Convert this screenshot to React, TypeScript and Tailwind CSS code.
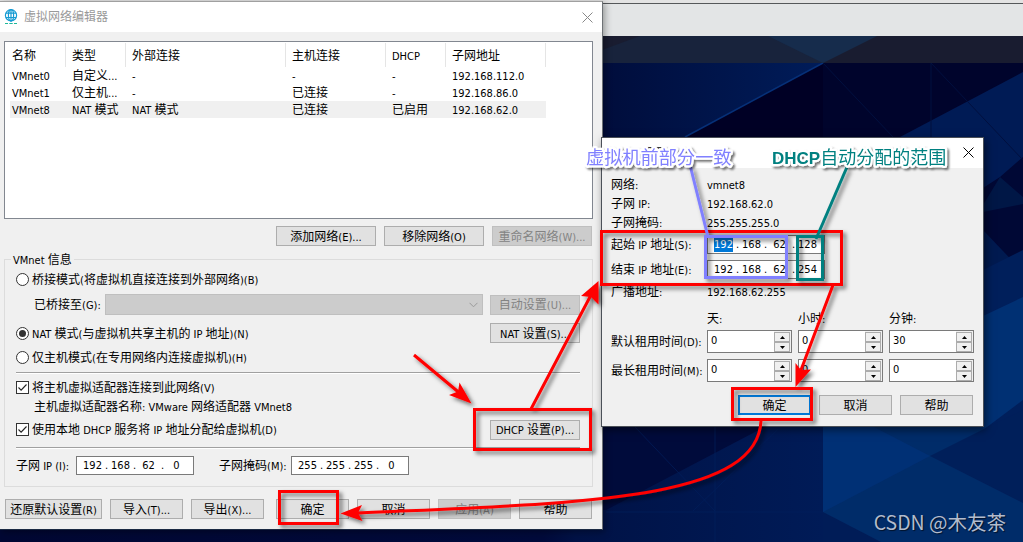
import type { ReactNode } from 'react'

const columns = [
  { title: '名称', width: 'w-[60px]' },
  { title: '类型', width: 'w-[60px]' },
  { title: '外部连接', width: 'w-[160px]' },
  { title: '主机连接', width: 'w-[100px]' },
  { title: 'DHCP', width: 'w-[60px]' },
  { title: '子网地址', width: 'w-[100px]' },
]

const networks = [
  ['VMnet0', '自定义...', '-', '-', '-', '192.168.112.0'],
  ['VMnet1', '仅主机...', '-', '已连接', '-', '192.168.86.0'],
  ['VMnet8', 'NAT 模式', 'NAT 模式', '已连接', '已启用', '192.168.62.0'],
]

// Latin runs are set one pixel smaller than the Chinese ones
function T({ children }: { children: string }) {
  const parts = children.split(/([^\u2e80-\u9fff]+)/).filter(Boolean)
  return (
    <span className="inline-block pt-[2px] whitespace-pre">
      {parts.map((part, i) =>
        /[\u2e80-\u9fff]/.test(part) ? (
          <span key={i}>{part}</span>
        ) : (
          <span key={i} className="text-[11px]">{part}</span>
        )
      )}
    </span>
  )
}

function Button({ children, className = '', disabled = false, primary = false }: { children: string; className?: string; disabled?: boolean; primary?: boolean }) {
  const look = disabled
    ? 'border border-[#bfbfbf] bg-[#cccccc] text-[#838383]'
    : primary
      ? 'border-2 border-[#0078d7] bg-[#e1e1e1]'
      : 'border border-[#adadad] bg-[#e1e1e1]'
  return (
    <button className={`flex h-5 shrink-0 items-center justify-center ${look} ${className}`}>
      <T>{children}</T>
    </button>
  )
}

function Radio({ checked = false, children }: { checked?: boolean; children: string }) {
  return (
    <label className="flex h-[17px] items-center gap-[3px]">
      <span className="flex size-[13px] items-center justify-center rounded-full border border-[#333] bg-white">
        {checked && <span className="size-[7px] rounded-full bg-[#333]" />}
      </span>
      <T>{children}</T>
    </label>
  )
}

function Checkbox({ children }: { children: string }) {
  return (
    <label className="flex h-[17px] items-center gap-[3px]">
      <span className="flex size-[13px] items-center justify-center border border-[#333] bg-white">
        <svg className="size-[11px]" viewBox="0 0 11 11" fill="none" stroke="#222" strokeWidth="1.1">
          <path d="M1.5 5.5l2.6 2.7L9.5 2.5" />
        </svg>
      </span>
      <T>{children}</T>
    </label>
  )
}

function IpField({ value, selected = false }: { value: string[]; selected?: boolean }) {
  return (
    <div className="flex h-[19px] w-[118px] shrink-0 items-center border border-[#7a7a7a] bg-white pl-[3px] text-[11px]">
      {value.map((part, i) => (
        <div key={i} className="flex">
          {i > 0 && <span className="w-[3px] text-center">.</span>}
          <span className="flex w-[25px] justify-center">
            <span className={selected && i === 0 ? 'bg-[#0078d7] text-white' : ''}>{part}</span>
          </span>
        </div>
      ))}
    </div>
  )
}

function SpinButton({ up = false }: { up?: boolean }) {
  return (
    <span className="flex h-[10px] w-[16px] items-center justify-center border border-[#acacac] bg-[#f0f0f0]">
      <svg className="h-[3px] w-[5px]" viewBox="0 0 5 3">
        <path d={up ? 'M0 3L2.5 0L5 3Z' : 'M0 0L2.5 3L5 0Z'} fill="#000" />
      </svg>
    </span>
  )
}

function Spinner({ value }: { value: string }) {
  return (
    <div className="flex h-[23px] w-[85px] justify-between border border-[#7a7a7a] bg-white">
      <span className="pt-px pl-[3px] text-[11px] leading-[17px]">{value}</span>
      <span className="flex w-[17px] flex-col bg-[#f0f0f0] pt-px">
        <SpinButton up />
        <SpinButton />
      </span>
    </div>
  )
}

function Close({ color }: { color: string }) {
  return (
    <svg className="size-[11px]" viewBox="0 0 11 11" stroke={color} strokeWidth="1">
      <path d="M0.5 0.5L10.5 10.5M10.5 0.5L0.5 10.5" />
    </svg>
  )
}

function GlobeIcon() {
  return (
    <svg className="h-4 w-[14px]" viewBox="0 0 14 16" fill="none" stroke="#159bd3" strokeWidth="1.2">
      <circle cx="7" cy="6.3" r="5.6" />
      <ellipse cx="7" cy="6.3" rx="2.6" ry="5.6" />
      <path d="M1.9 4.1h10.2M1.9 8.5h10.2M7 .7v12" />
      <path d="M1 14.5h3M5.3 14.5h3.4M10 14.5h3" stroke="#1fb89b" />
    </svg>
  )
}

function Wallpaper() {
  return (
    <svg className="absolute inset-0" width="1023" height="542" viewBox="0 0 1023 542">
      <defs>
        <linearGradient id="left" x1="602" x2="823" y1="0" y2="0" gradientUnits="userSpaceOnUse">
          <stop offset="0" stopColor="#000d3c" />
          <stop offset="1" stopColor="#001c59" />
        </linearGradient>
        <linearGradient id="base" x1="0" x2="823" y1="0" y2="0" gradientUnits="userSpaceOnUse">
          <stop offset="0" stopColor="#000733" />
          <stop offset="0.66" stopColor="#000a3b" />
          <stop offset="0.7" stopColor="#001246" />
          <stop offset="1" stopColor="#001b57" />
        </linearGradient>
      </defs>
      <rect width="1023" height="542" fill="#00042c" />
      <path d="M602 63H823L602 182Z" fill="url(#left)" />
      <path d="M823 63L685 137H823Z" fill="#000025" />
      <path d="M823 63L685 137" stroke="#063078" strokeWidth="1.5" />
      <path d="M1023 72L900 137V300H1023Z" fill="#001b55" />
      <path d="M983 188L1000 177L1023 157V340L983 310Z" fill="#000835" />
      <path d="M983 205L1000 177L1023 197V204L983 212Z" fill="#001746" />
      <path d="M983 230L1023 272V300L983 318Z" fill="#001a50" />
      <path d="M931 63V137M931 63L1023 160M823 63L893 137" stroke="#00103f" />
      <rect x="0" y="420" width="823" height="122" fill="url(#base)" />
      <path d="M602 420H778L606 510H602Z" fill="#000b3b" />
      <path d="M635 427L715 511M778 429L693 511M715 427V542M606 512H823" stroke="#001f5c" strokeWidth=".7" />
      <path d="M823 426H1023V542H823Z" fill="#002c69" />
      <path d="M983 270L1023 250V430H983Z" fill="#001f5b" />
      <path d="M983 316L1023 297V400L983 430Z" fill="#003073" />
      <path d="M823 426H872L930 456L823 512Z" fill="#003075" />
      <path d="M930 456L1000 421L1023 410V503Z" fill="#001f5a" />
      <path d="M823 512L881 542H823Z" fill="#001c57" />
      <path d="M602 4H1023V36H602Z" fill="#e3e5e6" />
      <path d="M0 0H1023V3H0Z" fill="#e3e3e3" />
      <path d="M602 3.5H1023" stroke="#55585a" />
      <path d="M602 36H1023V63H602Z" fill="#191c30" />
      <path d="M640 36H823V63H602V50Z" fill="#18233c" />
      <path d="M768 36H877L823 63Z" fill="#162c4c" />
    </svg>
  )
}

function Window({ className, children }: { className: string; children: ReactNode }) {
  return <div className={`absolute flex flex-col bg-[#f0f0f0] ${className}`}>{children}</div>
}

function EditorWindow() {
  return (
    <Window className="top-px left-0 h-[529px] w-[603px] border-t border-r border-b border-t-[#a0a0a0] border-r-[#6e7276] border-b-[#1b2a44] shadow-[2px_2px_7px_rgba(0,0,0,0.35)]">
      <div className="flex h-[30px] shrink-0 items-center bg-white pr-[9px] pl-1">
        <GlobeIcon />
        <span className="ml-[6px] grow text-[#999]">虚拟网络编辑器</span>
        <Close color="#888" />
      </div>

      <div className="mt-[9px] ml-1 h-[178px] w-[589px] shrink-0 border border-[#828790] bg-white pl-px">
        <div className="flex h-[25px] pt-px">
          {columns.map((column) => (
            <div key={column.title} className={`flex items-center border-r border-[#e5e5e5] pl-[6px] ${column.width}`}>
              <T>{column.title}</T>
            </div>
          ))}
        </div>
        {networks.map((row, r) => (
          <div key={row[0]} className={`ml-1 flex h-[17px] w-[536px] items-center ${r === 2 ? 'bg-[#f0f0f0]' : ''}`}>
            {row.map((cell, i) => (
              <div key={i} className={`flex shrink-0 pl-[2px] ${columns[i].width}`}>
                <T>{cell}</T>
              </div>
            ))}
          </div>
        ))}
      </div>

      <div className="mt-[7px] flex justify-end gap-2 pr-[10px]">
        <Button className="w-[100px]">添加网络(E)...</Button>
        <Button className="w-[100px]">移除网络(O)</Button>
        <Button className="w-[100px]" disabled>重命名网络(W)...</Button>
      </div>

      <fieldset className="mt-[5px] ml-1 flex h-[236px] w-[589px] shrink-0 flex-col border border-[#dcdcdc] pr-3 pl-[11px]">
        <legend className="-ml-[5px] flex h-4 items-center px-[2px]"><T>VMnet 信息</T></legend>
        <div className="flex h-[25px] items-center">
          <Radio>桥接模式(将虚拟机直接连接到外部网络)(B)</Radio>
        </div>
        <div className="flex h-[25px] items-center pl-[18px]">
          <span className="flex w-[71px]"><T>已桥接至(G):</T></span>
          <div className="mr-[7px] flex h-[21px] w-[378px] items-center justify-end border border-[#bfbfbf] bg-[#cccccc] pr-1">
            <svg className="h-[6px] w-[9px]" viewBox="0 0 9 6" fill="none" stroke="#9a9a9a">
              <path d="M.5 .8L4.5 4.8L8.5 .8" />
            </svg>
          </div>
          <Button className="w-[90px]" disabled>自动设置(U)...</Button>
        </div>
        <div className="mt-px flex h-[30px] items-center justify-between">
          <Radio checked>NAT 模式(与虚拟机共享主机的 IP 地址)(N)</Radio>
          <Button className="w-[90px]">NAT 设置(S)...</Button>
        </div>
        <div className="flex h-[24px] items-start pt-px">
          <Radio>仅主机模式(在专用网络内连接虚拟机)(H)</Radio>
        </div>
        <div className="h-[2px] border-t border-b border-t-[#a0a0a0] border-b-white" />
        <div className="flex h-[26px] items-center">
          <Checkbox>将主机虚拟适配器连接到此网络(V)</Checkbox>
        </div>
        <div className="flex h-[13px] items-center pl-[18px]"><T>主机虚拟适配器名称: VMware 网络适配器 VMnet8</T></div>
        <div className="mb-px flex h-[33px] items-center justify-between">
          <Checkbox>使用本地 DHCP 服务将 IP 地址分配给虚拟机(D)</Checkbox>
          <Button className="w-[90px]">DHCP 设置(P)...</Button>
        </div>
        <div className="h-[2px] border-t border-b border-t-[#a0a0a0] border-b-white" />
        <div className="flex h-[32px] items-center">
          <span className="flex w-[60px]"><T>子网 IP (I):</T></span>
          <IpField value={['192', '168', '62', '0']} />
          <span className="ml-[25px] flex w-[72px]"><T>子网掩码(M):</T></span>
          <IpField value={['255', '255', '255', '0']} />
        </div>
      </fieldset>

      <div className="mt-3 flex gap-2 pl-[5px]">
        <Button className="w-[97px]">还原默认设置(R)</Button>
        <Button className="w-[73px]">导入(T)...</Button>
        <Button className="w-[73px]">导出(X)...</Button>
        <Button className="ml-1 w-[73px]">确定</Button>
        <Button className="w-[73px]">取消</Button>
        <Button className="w-[73px]" disabled>应用(A)</Button>
        <Button className="w-[73px]">帮助</Button>
      </div>
    </Window>
  )
}

function DhcpWindow() {
  return (
    <Window className="top-[137px] left-[601px] h-[290px] w-[383px] border border-[#4b5058] shadow-[2px_3px_8px_rgba(0,0,0,0.5)]">
      <div className="flex h-[30px] shrink-0 items-center justify-between bg-white pr-[9px] pl-[9px]">
        <T>DHCP 设置</T>
        <span className="-mt-[2px]"><Close color="#000" /></span>
      </div>
      <div className="flex flex-col pt-[7px] pl-[9px]">
        <div className="grid grid-cols-[96px_1fr] grid-rows-[19px_19px_19px_25px_24px_20px] items-center">
          <T>网络:</T>
          <T>vmnet8</T>
          <T>子网 IP:</T>
          <T>192.168.62.0</T>
          <T>子网掩码:</T>
          <T>255.255.255.0</T>
          <T>起始 IP 地址(S):</T>
          <IpField value={['192', '168', '62', '128']} selected />
          <T>结束 IP 地址(E):</T>
          <IpField value={['192', '168', '62', '254']} />
          <T>广播地址:</T>
          <T>192.168.62.255</T>
        </div>
        <div className="mt-[9px] grid grid-cols-[96px_91px_91px_85px] grid-rows-[17px_29px_29px] items-center">
          <span />
          <T>天:</T>
          <T>小时:</T>
          <T>分钟:</T>
          <T>默认租用时间(D):</T>
          <Spinner value="0" />
          <Spinner value="0" />
          <Spinner value="30" />
          <T>最长租用时间(M):</T>
          <Spinner value="0" />
          <Spinner value="0" />
          <Spinner value="0" />
        </div>
      </div>
      <div className="mt-[10px] flex justify-end gap-2 pr-[10px]">
        <Button className="w-[73px]" primary>确定</Button>
        <Button className="w-[73px]">取消</Button>
        <Button className="w-[73px]">帮助</Button>
      </div>
    </Window>
  )
}

function Annotations() {
  return (
    <svg className="absolute inset-0" width="1023" height="542" viewBox="0 0 1023 542">
      <defs>
        <filter id="shadow" x="0" y="0" width="1023" height="542" filterUnits="userSpaceOnUse">
          <feDropShadow dx="3" dy="3" stdDeviation="2" floodColor="#000" floodOpacity="0.55" />
        </filter>
        <filter id="text-shadow" x="0" y="0" width="1023" height="542" filterUnits="userSpaceOnUse">
          <feDropShadow dx="2" dy="2" stdDeviation="1.2" floodColor="#000" floodOpacity="0.55" />
        </filter>
      </defs>
      <g filter="url(#shadow)" fill="none" stroke="#ff0000" strokeWidth="3">
        <rect x="601.5" y="231.5" width="240" height="53" />
        <rect x="474.5" y="409.5" width="116" height="40" />
        <rect x="279.5" y="491.5" width="58" height="32" />
        <rect x="732.5" y="388.5" width="79" height="31" />
        <path d="M414 355L462 395M531 409L591 295M833 285L801 370" />
        <path d="M761 421C757 502 575 503 358 513" />
        <g fill="#ff0000" stroke="none">
          <path d="M471.5 403.5L459.5 382.5L458 391.5L449 395Z" />
          <path d="M598.5 281L581 296L591 297L598.5 304.5Z" />
          <path d="M795.5 387L795.5 363L801 370L811 369.5Z" />
          <path d="M340.5 513.5L362 505L358 513L362.5 521Z" />
        </g>
      </g>
      <g filter="url(#shadow)" fill="none" strokeWidth="3">
        <path d="M690.5 167L707.5 235" stroke="#8080ff" />
        <rect x="705.5" y="236.5" width="81" height="41" stroke="#8080ff" />
        <path d="M847 167L816 239" stroke="#008080" />
        <rect x="797.5" y="236.5" width="25" height="43" stroke="#008080" />
      </g>
      <g filter="url(#text-shadow)" stroke="#fff" strokeWidth="4.5" strokeLinejoin="round" paintOrder="stroke">
        <text x="586" y="163.5" fill="#8080ff" className="text-[18.2px]">虚拟机前部分一致</text>
        <text x="772" y="163.5" fill="#008080" className="text-[18px]">
          <tspan className="font-['Liberation_Sans',sans-serif] text-[17px] font-bold">DHCP</tspan>自动分配的范围
        </text>
      </g>
    </svg>
  )
}

export default function App() {
  return (
    <div className="relative h-[542px] w-[1023px] overflow-hidden font-['DejaVu_Sans_Condensed','Noto_Sans','Noto_Sans_CJK_SC',sans-serif] text-[12px] leading-[15px] text-black">
      <Wallpaper />
      <EditorWindow />
      <DhcpWindow />
      <Annotations />
      <div className="absolute right-[17px] bottom-[7px] font-['Noto_Sans_CJK_SC',sans-serif] text-[19.5px] leading-[26px] whitespace-pre text-[#b3bccd] [text-shadow:1px_1px_1px_rgba(0,0,0,0.6)]">
        CSDN @木友茶
      </div>
    </div>
  )
}
